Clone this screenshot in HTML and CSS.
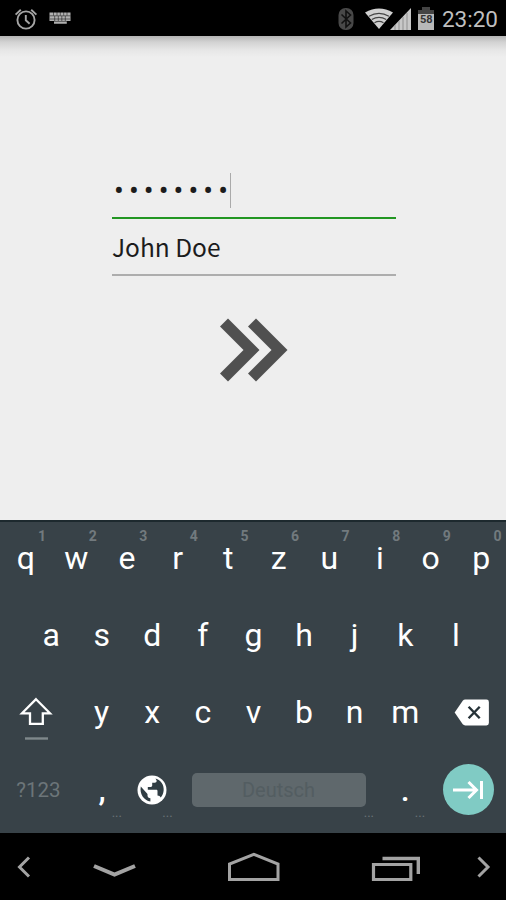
FILE: index.html
```
<!DOCTYPE html>
<html lang="de">
<head>
    <meta charset="UTF-8">
    <title>Login</title>
    <link rel="stylesheet" href="styles.css">
</head>
<body>
    <div class="statusbar">
        <svg class="icon-alarm" width="24" height="22" viewBox="0 0 24 22" fill="none" stroke="#a5a5a5">
            <circle cx="12" cy="12" r="8.6" stroke-width="1.9"/>
            <path d="M11.8 7v5.3l3.8 3.4M1.6 6.6 6.8 1.8M22.4 6.6 17.2 1.8" stroke-width="1.9"/>
        </svg>
        <svg class="icon-keyboard" width="22" height="13" viewBox="0 0 22 13" fill="#b0b0b0">
            <path d="M.5.5h21v8.5h-3.7v2.8H5V9H.5z"/>
            <path d="M.5 3.8h21M1 7h20M5 9.4h13M4.5 0v3.5M8 0v3.5M11.3 0v3.5M14.7 0v3.5M18 0v3.5M5.7 4v5M9.3 4v5M12.8 4v5M16.3 4v5" stroke="#000" stroke-opacity=".55" stroke-width=".9"/>
        </svg>
        <div class="status-right">
            <svg width="16" height="24" viewBox="0 0 16 24">
                <rect x=".5" y="1" width="15" height="22" rx="7" fill="#484848"/>
                <path d="M3.5 7.5l9 8.5-4.5 4V4l4.5 4-9 8.5" fill="none" stroke="#111" stroke-width="1.6"/>
            </svg>
            <svg class="icon-wifi" width="28" height="21" viewBox="0 0 28 21">
                <path d="M0 4.5Q14-3.5 28 4.5L14 21z" fill="#d0d0d0"/>
                <path d="M4 8.2q10-5.5 20 0M6.8 11.5q7.2-4.3 14.4 0M9.5 14.8q4.5-2.7 9 0" fill="none" stroke="#444" stroke-width="1.2"/>
            </svg>
            <svg class="icon-signal" width="21" height="22" viewBox="0 0 21 22">
                <path d="M0 22 21 0v22z" fill="#c8c8c8"/>
                <path d="M5 17v5M9 13v9M13 9v13M17 5v17" stroke="#909090" stroke-width="1"/>
            </svg>
            <div class="battery">
                <svg width="16" height="23" viewBox="0 0 16 23">
                    <path d="M4 0h8v3h4v5H0V3h4z" fill="#444"/>
                    <path d="M0 7h16v16H0z" fill="#b8b8b8"/>
                </svg>
                <span>58</span>
            </div>
            <span class="clock">23:20</span>
        </div>
    </div>

    <div class="content">
        <div class="field active"><span class="password">••••••••</span><span class="cursor"></span></div>
        <div class="field">John Doe</div>
        <svg class="next" width="68" height="64" viewBox="0 0 68 64" fill="#505050">
            <path d="M0 8.5 8 .5 39.5 32 8 63.5l-8-8L23.5 32z"/>
            <path d="M28 8.5l8-8L67.5 32 36 63.5l-8-8L51.5 32z"/>
        </svg>
    </div>

    <div class="keyboard">
        <div class="row">
            <div class="key">q<sup>1</sup></div>
            <div class="key">w<sup>2</sup></div>
            <div class="key">e<sup>3</sup></div>
            <div class="key">r<sup>4</sup></div>
            <div class="key">t<sup>5</sup></div>
            <div class="key">z<sup>6</sup></div>
            <div class="key">u<sup>7</sup></div>
            <div class="key">i<sup>8</sup></div>
            <div class="key">o<sup>9</sup></div>
            <div class="key">p<sup>0</sup></div>
        </div>
        <div class="row middle">
            <div class="key">a</div>
            <div class="key">s</div>
            <div class="key">d</div>
            <div class="key">f</div>
            <div class="key">g</div>
            <div class="key">h</div>
            <div class="key">j</div>
            <div class="key">k</div>
            <div class="key">l</div>
        </div>
        <div class="row">
            <div class="key wide shift">
                <svg width="34" height="44" viewBox="0 0 34 44">
                    <path d="M17 3.2 31 17.3h-7.2v10.5H11V17.3H3z" fill="none" stroke="#fff" stroke-width="2.3"/>
                    <path d="M6 42.5h23" stroke="#7f888c" stroke-width="2.4"/>
                </svg>
            </div>
            <div class="key">y</div>
            <div class="key">x</div>
            <div class="key">c</div>
            <div class="key">v</div>
            <div class="key">b</div>
            <div class="key">n</div>
            <div class="key">m</div>
            <div class="key wide delete">
                <svg width="36" height="27" viewBox="0 0 36 28">
                    <path d="M0 14 8.4 1.7Q9.4.5 11 .5h22Q35.5.5 35.5 3v22q0 2.5-2.5 2.5H11q-1.6 0-2.6-1.2z" fill="#fff"/>
                    <path d="M14.5 8l11.5 12M26 8 14.5 20" stroke="#263238" stroke-width="2.5"/>
                </svg>
            </div>
        </div>
        <div class="row">
            <div class="key wide symbols">?123</div>
            <div class="key punctuation">,<small>...</small></div>
            <div class="key">
                <svg width="30" height="30" viewBox="0 0 30 30">
                    <circle cx="15" cy="15" r="14.5" fill="#fff"/>
                    <path d="M18.5 3.5C24 5 27 10 26.7 15c-.2 3.5-1.3 5.5-3 7.6-.6-1.5-1.5-2.2-3.2-2.2v-4.2c0-.9-.5-1.4-1.4-1.4h-8.3v-2.9h2.9c1 0 1.5-.5 1.5-1.4V7.7h2.5c1.2 0 2-.7 2-1.9zM3.8 11.5l6.700 7.500v1.500c0 1.600 1.200 2.800 2.900 2.800v3.200C7 25.500 2.300 19 3.800 11.500z" fill="#303d43"/>
                </svg>
                <small>...</small>
            </div>
            <div class="space"><span>Deutsch</span></div>
            <div class="key punctuation">.<small>...</small></div>
            <div class="key wide">
                <div class="enter-button">
                    <svg width="32" height="20" viewBox="0 0 32 20" fill="none" stroke="#fff" stroke-width="3">
                        <path d="M1 10h23M16.5 2l8 8-8 8M29.5 1v18"/>
                    </svg>
                </div>
            </div>
            <small class="space-hint">...</small>
        </div>
    </div>

    <div class="navbar">
        <svg width="506" height="67" viewBox="0 0 506 67" fill="none" stroke="#a3a3a3">
            <path d="M29 24.5 19.5 34l9.500 9.500" stroke-width="3"/>
            <path d="M94 33l20.5 8.700L135 33" stroke-width="4"/>
            <path d="M229.5 46.5V31l24.3-9.700L278 31v15.500z" stroke-width="3"/>
            <path d="M373.5 31.5h37.300v15h-37.300z" stroke-width="3.2"/>
            <path d="M382.5 25.5h35.800v15.500" stroke-width="3.4"/>
            <path d="M478.5 24.5l9.500 9.500-9.500 9.500" stroke-width="3"/>
        </svg>
    </div>
</body>
</html>
```
FILE: styles.css
```
* {
    margin: 0;
    padding: 0;
    box-sizing: border-box;
}

body {
    width: 506px;
    height: 900px;
    display: flex;
    flex-direction: column;
    overflow: hidden;
    font-family: Roboto, sans-serif;
    background: #eee;
}

svg {
    display: block;
}

/* status bar */
.statusbar {
    display: flex;
    align-items: center;
    height: 36px;
    padding: 1px 8px 0 14px;
    background: #000;
}

.icon-keyboard {
    margin-left: 11px;
}

.status-right {
    display: flex;
    align-items: center;
    margin-left: auto;
}

.icon-wifi {
    margin-left: 11px;
}

.icon-signal {
    margin-left: -3px;
}

.battery {
    position: relative;
    margin: 0 8px 0 7px;
}

.battery span {
    position: absolute;
    left: 2px;
    top: 7px;
    font-size: 11px;
    font-weight: bold;
    line-height: 12px;
    color: #333;
}

.clock {
    font-size: 22.5px;
    line-height: 30px;
    color: #bfbfbf;
}

/* form */
.content {
    height: 484px;
    padding: 131px 110px 0 112px;
    background: linear-gradient(#b4b4b4, #d2d2d2 6px, #e6e6e6 14px, #eee 21px);
}

.field {
    display: flex;
    align-items: center;
    height: 57px;
    border-bottom: 2px solid #adadad;
    font-family: "Noto Sans CJK SC", Roboto, sans-serif;
    font-size: 24.5px;
    line-height: 30px;
    color: #1c1c1c;
}

.field.active {
    height: 52px;
    padding: 0 0 3px 2px;
    border-bottom-width: 2px;
    border-color: #229622;
    font-family: Roboto, sans-serif;
    font-size: 29px;
}

.password {
    letter-spacing: 5.1px;
    margin-right: -3px;
}

.cursor {
    width: 1px;
    height: 35px;
    background: #aaa;
}

.next {
    margin: 42px 0 0 108px;
}

/* keyboard */
.keyboard {
    height: 313px;
    border-top: 2px solid #1d292e;
    background: #384248;
}

.row {
    position: relative;
    display: flex;
    height: 77.3px;
    padding: 0 0 6px 0.5px;
}

.row.middle {
    padding-left: 25.8px;
}

.key {
    position: relative;
    display: flex;
    flex: none;
    align-items: center;
    justify-content: center;
    width: 50.6px;
    font-size: 32px;
    color: #fff;
}

.key.wide {
    width: 75.9px;
}

.key sup {
    position: absolute;
    right: 5px;
    top: 6px;
    font-size: 14px;
    font-weight: bold;
    line-height: 17px;
    color: #727a7e;
}

.key small,
.space-hint {
    position: absolute;
    right: 5px;
    bottom: 6px;
    font-size: 13px;
    font-weight: normal;
    line-height: 13px;
    color: #6a7377;
}

.key.punctuation {
    padding-left: 1px;
    font-weight: 500;
}

.shift {
    padding: 11px 5px 0 0;
}

.delete {
    padding-left: 7px;
}

.key.symbols {
    font-size: 20.5px;
    color: #6c7579;
}

.space {
    display: flex;
    align-items: center;
    width: 202.4px;
    padding: 0 14px;
}

.space span {
    flex: 1;
    height: 34px;
    border-radius: 5px;
    background: #5f686c;
    font-size: 20px;
    line-height: 34px;
    text-align: center;
    color: #535d61;
}

.space-hint {
    right: 132px;
    bottom: 12px;
}

.enter-button {
    display: flex;
    align-items: center;
    justify-content: center;
    width: 51px;
    height: 51px;
    border-radius: 50%;
    background: #80cbc4;
}

/* navigation bar */
.navbar {
    height: 67px;
    background: #000;
}
```
